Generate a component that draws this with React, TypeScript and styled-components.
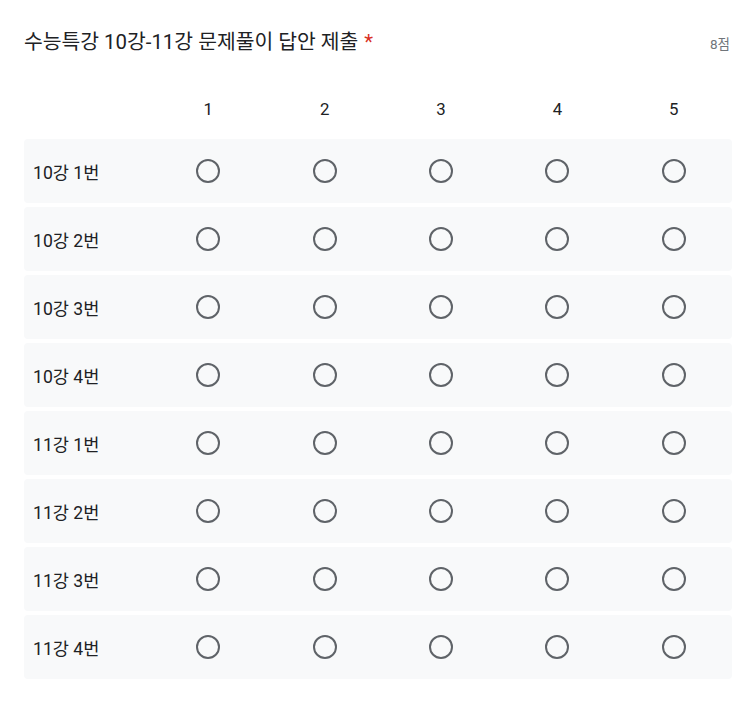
import styled, { createGlobalStyle } from "styled-components";

const columns = ["1", "2", "3", "4", "5"];
const rows = [
  "10강 1번",
  "10강 2번",
  "10강 3번",
  "10강 4번",
  "11강 1번",
  "11강 2번",
  "11강 3번",
  "11강 4번",
];

export default function App() {
  return (
    <>
      <GlobalStyle />
      <Question>
        <Header>
          <Title>
            수능특강 10강-11강 문제풀이 답안 제출
            <Required>*</Required>
          </Title>
          <Points>8점</Points>
        </Header>

        <Grid>
          <HeadRow>
            <span />
            {columns.map((c) => (
              <ColLabel key={c}>{c}</ColLabel>
            ))}
          </HeadRow>
          {rows.map((r) => (
            <Row key={r} role="radiogroup" aria-label={r}>
              <RowLabel>{r}</RowLabel>
              {columns.map((c) => (
                <Cell key={c}>
                  <Radio role="radio" aria-checked="false" aria-label={c} />
                </Cell>
              ))}
            </Row>
          ))}
        </Grid>
      </Question>
    </>
  );
}

const GlobalStyle = createGlobalStyle`
  body {
    margin: 0;
    background: #fff;
    font-family: Roboto, "Noto Sans CJK KR", sans-serif;
    color: #202124;
  }
`;

const Question = styled.div`
  width: 708px;
  padding-left: 24px;
`;

const Header = styled.div`
  display: flex;
  justify-content: space-between;
  align-items: baseline;
  padding-top: 28px;
  height: 51px;
`;

const Title = styled.div`
  font-size: 20.4px;
  line-height: 28px;
`;

const Required = styled.span`
  color: #d93025;
  margin-left: 6px;
`;

const Points = styled.div`
  font-size: 13.5px;
  color: #70757a;
  padding-right: 2px;
`;

const Grid = styled.div`
  display: flex;
  flex-direction: column;
  gap: 4px;
`;

const rowColumns = `
  display: grid;
  grid-template-columns: 126px repeat(5, 1fr);
  align-items: center;
`;

const HeadRow = styled.div`
  ${rowColumns}
  height: 52px;
  padding-top: 4px;
`;

const ColLabel = styled.span`
  text-align: center;
  font-size: 16.8px;
`;

const Row = styled.div`
  ${rowColumns}
  height: 64px;
  background: #f8f9fa;
  border-radius: 4px;
`;

const RowLabel = styled.span`
  padding-left: 9px;
  font-size: 17.6px;
`;

const Cell = styled.span`
  display: flex;
  justify-content: center;
`;

const Radio = styled.span`
  box-sizing: border-box;
  width: 24px;
  height: 24px;
  border: 2.4px solid #5f6368;
  border-radius: 50%;
  cursor: pointer;
`;
